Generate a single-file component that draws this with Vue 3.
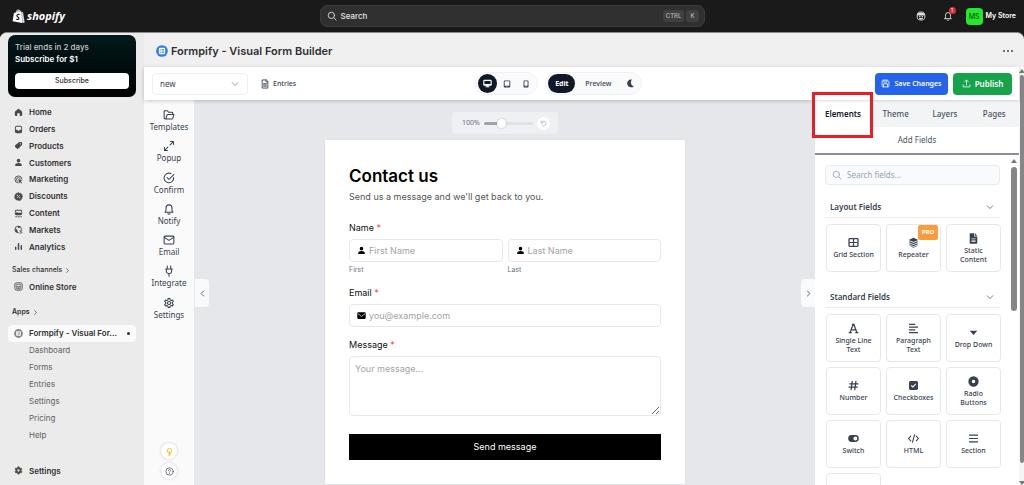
<script setup>
import { ref } from 'vue'

const icons = {
  home: '<path fill="currentColor" d="M8.9 1.7a1.4 1.4 0 0 0-1.8 0L2.3 5.9c-.5.4-.8 1-.8 1.7v5c0 .9.7 1.6 1.6 1.6h2.6V11a2.3 2.3 0 0 1 4.6 0v3.2h2.6c.9 0 1.6-.7 1.6-1.6v-5c0-.7-.3-1.3-.8-1.7z"/>',
  orders: '<path fill="currentColor" fill-rule="evenodd" d="M4.6 1.5h6.8a3 3 0 0 1 3 3v7a3 3 0 0 1-3 3H4.600a3 3 0 0 1-3-3v-7a3 3 0 0 1 3-3zm0 1.600a1.400 1.400 0 0 0-1.400 1.400v4h2.300c.5 0 .8.3 1 .7.200.700.700 1 1.500 1s1.300-.3 1.500-1c.2-.4.5-.7 1-.7h2.300v-4a1.400 1.400 0 0 0-1.400-1.400z"/>',
  products: '<path fill="currentColor" fill-rule="evenodd" d="M8.700 2.300c.4-.4 1-.6 1.600-.6l3 .1c.6 0 1.100.5 1.100 1.100l.1 3c0 .6-.2 1.200-.6 1.600l-6 6a2.200 2.200 0 0 1-3.100 0l-2.700-2.700a2.200 2.200 0 0 1 0-3.100zM11.300 6a1.100 1.100 0 1 0 0-2.200 1.100 1.100 0 0 0 0 2.200z"/>',
  person: '<path fill="currentColor" d="M8 1.500a3.200 3.200 0 1 1 0 6.400 3.200 3.200 0 0 1 0-6.400zM2 12.600c.3-2.500 2.300-3.900 6-3.900s5.700 1.400 6 3.900c.1 1-.5 1.700-1.500 1.700h-9c-1 0-1.600-.7-1.500-1.700z"/>',
  marketing: '<path fill="none" stroke="currentColor" stroke-width="1.600" stroke-linecap="round" d="M7.500 14.200A6.300 6.300 0 1 1 14.200 7.500M7 11A3.300 3.300 0 1 1 11 7"/><path fill="currentColor" d="M7.500 7.300 15 10l-3 1.300 2.500 2.500-1.200 1.200-2.500-2.600-1 2.800z"/>',
  discounts: '<path fill="currentColor" stroke="currentColor" stroke-width="1.200" stroke-linejoin="round" d="M8 1l1.700 1.300L11.800 2l.8 2 2 .8-.3 2.100L15 8.500l-1 1.700.1 2-2 .8-.8 1.900-2-.3L8 15l-1.600-.9-2 .3-.8-1.900-2-.8.1-2L1 8.200l.9-1.500-.2-2 2-.8L4.500 2l2 .3z"/><path stroke="#ebebeb" stroke-width="1.200" stroke-linecap="round" d="M5.800 10.200l4.400-4.400"/><circle cx="5.900" cy="6" r="1" fill="#ebebeb"/><circle cx="10.100" cy="10" r="1" fill="#ebebeb"/>',
  content: '<path fill="currentColor" fill-rule="evenodd" d="M4 1.500h8a2.500 2.500 0 0 1 2.500 2.500v4.500A2.500 2.500 0 0 1 12 11H4a2.500 2.500 0 0 1-2.500-2.500V4A2.500 2.500 0 0 1 4 1.500zm0 1.400c-.6 0-1.100.5-1.100 1.100v3l2.300-1.700 3 2 2.200-1.200 2.700 1.500V4c0-.6-.5-1.100-1.100-1.100z"/><path stroke="currentColor" stroke-width="1.400" stroke-linecap="round" stroke-dasharray="2.600 2" d="M3 13.800h10.500"/>',
  markets: '<circle cx="7.500" cy="8" r="5.900" fill="none" stroke="currentColor" stroke-width="1.500"/><path fill="currentColor" d="M2 6.500c2.500-.2 3.500 1 3.300 2.500l1.500 1.700-.8 3C3.500 13 1.500 10 2 6.500zM7 2c-.5 2 0 3 2 3.200l1.700-1.400L12 3.600C10.500 2 8.500 1.600 7 2z"/><circle cx="12" cy="11.500" r="3.800" fill="#ebebeb"/><path fill="none" stroke="currentColor" stroke-width="1.500" stroke-linecap="round" d="M14 9.300h-2.200a1.200 1.200 0 0 0 0 2.500h.9a1.200 1.200 0 0 1 0 2.500h-2.200"/>',
  analytics: '<path stroke="currentColor" stroke-width="2.700" stroke-linecap="round" d="M3 9.500v3.500M8 3v10M13 6.800V13"/>',
  store: '<rect x="1.500" y="1.500" width="13" height="13" rx="3" fill="none" stroke="currentColor" stroke-width="1.600"/><path fill="none" stroke="currentColor" stroke-width="1.200" d="M4.500 4.300h7l.8 2.600c0 1-.7 1.500-1.500 1.500S9.400 7.900 9.400 7c0 .9-.6 1.400-1.400 1.400S6.600 7.900 6.600 7c0 .9-.6 1.400-1.400 1.400S3.700 7.900 3.700 6.900zM4.700 8.500v3.700h6.600V8.500M7 12v-2h2v2"/>',
  gear: '<path fill="currentColor" stroke="currentColor" stroke-width="1" stroke-linejoin="round" fill-rule="evenodd" d="M6.700 1h2.600l.5 1.900 1.200.7 1.900-.6 1.300 2.300-1.400 1.400v1.400l1.400 1.400-1.300 2.300-1.900-.5-1.200.7-.5 1.900H6.700L6.200 12 5 11.300l-1.900.5-1.300-2.300 1.400-1.400V6.700L1.800 5.300 3.100 3l1.900.6 1.200-.7zM8 4.900a2.500 2.500 0 1 0 0 5 2.500 2.500 0 0 0 0-5z" transform="translate(0 .5)"/>',
  app: '<circle cx="8" cy="8" r="7.800" fill="currentColor"/><rect x="3.800" y="3.800" width="8.400" height="8.400" rx="1.400" fill="#fff"/><path stroke="currentColor" stroke-width="1.100" d="M5.200 6h1M5.200 8h1M5.200 10h1M7.500 6h3.300M7.500 8h3.300M7.500 10h3.300"/>',
  chevR: '<path class="s" d="M6 3.500 10.500 8 6 12.500"/>',
  chevL: '<path class="s" d="M10 3.500 5.500 8 10 12.500"/>',
  chevD: '<path class="s" d="M2.500 5.500 8 11l5.500-5.500"/>',
  search: '<circle class="s" cx="7" cy="7" r="5"/><path class="s" d="m11 11 3.500 3.500"/>',
  folder: '<path class="s" d="M3.700 13.300 5.400 8a1 1 0 0 1 1-.7h8.200l-1.500 5.200a1.200 1.200 0 0 1-1.200.8H2.700a1.200 1.200 0 0 1-1.200-1.200V3.500a1.200 1.200 0 0 1 1.200-1.200h3.200l1.500 2h4.400A1.200 1.200 0 0 1 13 5.500v1.800"/>',
  expand: '<path class="s" d="M10 2h4v4M14 2 9.500 6.500M6 14H2v-4M2 14l4.500-4.500"/>',
  check: '<path class="s" d="M14.200 7.200A6.400 6.400 0 1 1 10.500 2.100M5.500 7.500 8 10l6.500-6.700"/>',
  bell: '<path class="s" d="M3.500 11.500C4.300 10.300 4 9 4 6.500a4 4 0 0 1 8 0c0 2.500-.3 3.800.5 5 .3.400.8.700.8.700H2.700s.5-.3.800-.700zM6.500 14.300c.8.700 2.200.7 3 0"/>',
  mail: '<rect class="s" x="1.500" y="2.800" width="13" height="10.500" rx="1.200"/><path class="s" d="m1.800 4.500 6.200 4 6.200-4"/>',
  plug: '<path class="s" d="M8 15v-3.500M5.700 5V1.500M10.300 5V1.500M3.500 5.300h9M4.500 5.300v3a3 3 0 0 0 3 3h1a3 3 0 0 0 3-3v-3"/>',
  cog: '<path class="s" d="M6.900 1.500h2.200l.4 1.900 1.400.8 1.800-.6 1.100 1.900-1.400 1.300v1.600l1.400 1.300-1.100 1.900-1.800-.6-1.400.8-.4 1.900H6.900l-.4-1.900-1.400-.8-1.800.6-1.100-1.900 1.400-1.300V6.800L2.200 5.500l1.100-1.900 1.800.6 1.400-.8z" transform="translate(0 .4)"/><circle class="s" cx="8" cy="8" r="2.100"/>',
  bulb: '<path class="s" d="M6 11.500c0-1.800-2-2.500-2-5a4 4 0 0 1 8 0c0 2.500-2 3.200-2 5zM6.500 14.500h3M8 11V7.500"/>',
  help: '<circle class="s" cx="8" cy="8" r="6.500"/><path class="s" d="M6 6.300c.2-2.600 4.200-2.400 4 0C9.900 7.500 8 7.800 8 9.200M8 11.500v.1"/>',
  doc: '<path class="s" d="M9.500 1.500h-6v13h9v-10zM9.500 1.500v3h3M5.800 7.500h4.400M5.800 9.500h4.400M5.800 11.500h4.400"/>',
  desktop: '<path fill="currentColor" fill-rule="evenodd" d="M2 1.500h12c.8 0 1.500.7 1.500 1.500v7.500c0 .8-.7 1.500-1.500 1.500H9.800v1.500h2v1.300H4.200v-1.300h2V12H2C1.200 12 .5 11.300.5 10.500V3c0-.8.7-1.500 1.500-1.500zm.5 2v5.500h11V3.500z"/>',
  tablet: '<path fill="currentColor" fill-rule="evenodd" d="M3 .8h10c.8 0 1.500.7 1.500 1.500v11.400c0 .8-.7 1.500-1.500 1.500H3c-.8 0-1.500-.7-1.500-1.500V2.300C1.500 1.500 2.200.8 3 .8zm.3 1.800v8.900h9.400V2.600zM7 12.700v1h2v-1z"/>',
  phone: '<path fill="currentColor" fill-rule="evenodd" d="M4.500.8h7c.8 0 1.500.7 1.500 1.500v11.400c0 .8-.7 1.500-1.500 1.500h-7c-.8 0-1.500-.7-1.500-1.500V2.300C3 1.500 3.700.8 4.500.8zm.3 1.800v8.900h6.400V2.600zM7 12.700v1h2v-1z"/>',
  moon: '<path fill="currentColor" d="M10.500 1A7 7 0 1 0 14 12.800C9 12.500 7 6 10.500 1z"/>',
  undo: '<path class="s" d="M2.500 2.500v4h4M2.800 6.300A5.600 5.600 0 1 1 4 12"/>',
  save: '<path class="s" d="M2 3a1 1 0 0 1 1-1h8.500L14 4.500V13a1 1 0 0 1-1 1H3a1 1 0 0 1-1-1zM5 2v3.500h5.500V2M4.500 14V8.500h7V14"/>',
  upload: '<path class="s" d="M8 10.500V2M4.800 5 8 1.800 11.200 5M2 10.500V14h12v-3.500"/>',
  grid: '<rect x="1.500" y="2.500" width="13" height="11" rx="1" fill="none" stroke="currentColor" stroke-width="1.900"/><path stroke="currentColor" stroke-width="1.800" d="M8 3v10M2 8h12"/>',
  layers: '<path fill="currentColor" d="m8 1 7 3.200-7 3.200-7-3.200zM2.800 6.300 8 8.700l5.200-2.400L15 7.200l-7 3.200-7-3.200zM2.800 9.300 8 11.700l5.200-2.400 1.800.9-7 3.300-7-3.300zM2.800 12.200 8 14.500l5.200-2.300.8.600-6 3-6-3z"/>',
  file: '<path fill="currentColor" fill-rule="evenodd" d="M3.500.5H9V5h4.500v9c0 .8-.7 1.500-1.500 1.500H4c-.8 0-1.500-.7-1.500-1.500V1.500c0-.5.500-1 1-1zM10 .5 13.500 4H10zM5 7.500v1h6v-1zm0 2.300v1h6v-1zm0 2.300v1h6v-1z"/>',
  letter: '<path fill="none" stroke="currentColor" stroke-width="1.900" d="M1 14h4.500M10.500 14H15M3 14 7.500 2h1L13 14M4.800 10h6.400M5.700 2h3"/>',
  para: '<path stroke="currentColor" stroke-width="1.500" d="M1.500 2h9M1.500 6h13M1.500 10h9M1.500 14h13"/>',
  caret: '<path fill="currentColor" d="M2.500 5.500h11L8 11.500z"/>',
  hash: '<path stroke="currentColor" stroke-width="1.800" stroke-linecap="round" d="M6.200 2 4.500 14M11.500 2 9.800 14M2.500 5.500h12M1.500 10.500h12"/>',
  tick: '<rect x="1.500" y="1.500" width="13" height="13" rx="2" fill="currentColor"/><path fill="none" stroke="#fff" stroke-width="1.600" d="m4.800 8 2.300 2.300 4.200-4.500"/>',
  radio: '<circle cx="8" cy="8" r="5" fill="none" stroke="currentColor" stroke-width="5"/>',
  toggle: '<path fill="currentColor" fill-rule="evenodd" d="M5.300 3h5.400a5 5 0 0 1 0 10H5.300a5 5 0 0 1 0-10zm5.400 2.200a2.800 2.800 0 1 0 0 5.600 2.800 2.800 0 0 0 0-5.600z"/>',
  code: '<path fill="none" stroke="currentColor" stroke-width="1.600" stroke-linecap="round" stroke-linejoin="round" d="M4 4.500.8 8 4 11.500M12 4.500 15.200 8 12 11.500M9.500 2.500l-3 11"/>',
  lines: '<path stroke="currentColor" stroke-width="1.700" d="M1.500 3h13M1.500 8h13M1.500 13h13"/>',
  envelope: '<rect x="0.500" y="2" width="15" height="12" rx="1.800" fill="currentColor"/><path fill="none" stroke="#fff" stroke-width="1.200" d="M1 4.500 8 9.500l7-5"/>',
  sidekick: '<path fill="none" stroke="currentColor" stroke-width="1.500" d="M8 1.500c4 0 6 2 6 5.500v3c0 3-2 4.500-6 4.500S2 13 2 10V7c0-3.500 2-5.500 6-5.500z"/><path fill="currentColor" d="M2 5c2-3 10-3 12 0l-1 2H3zM5 8h2v2H5zM9 8h2v2H9zM4.500 11.200h7c-.5 1.600-1.700 2.300-3.500 2.300s-3-.7-3.500-2.300z"/>',
}

const nav = [
  ['home', 'Home'], ['orders', 'Orders'], ['products', 'Products'], ['person', 'Customers'],
  ['marketing', 'Marketing'], ['discounts', 'Discounts'], ['content', 'Content'],
  ['markets', 'Markets'], ['analytics', 'Analytics'],
]
const subNav = ['Dashboard', 'Forms', 'Entries', 'Settings', 'Pricing', 'Help']
const tools = [
  ['folder', 'Templates'], ['expand', 'Popup'], ['check', 'Confirm'], ['bell', 'Notify'],
  ['mail', 'Email'], ['plug', 'Integrate'], ['cog', 'Settings'],
]
const tabs = ['Elements', 'Theme', 'Layers', 'Pages']
const groups = [
  { title: 'Layout Fields', items: [['grid', 'Grid Section'], ['layers', 'Repeater', true], ['file', 'Static Content']] },
  {
    title: 'Standard Fields',
    items: [
      ['letter', 'Single Line Text'], ['para', 'Paragraph Text'], ['caret', 'Drop Down'],
      ['hash', 'Number'], ['tick', 'Checkboxes'], ['radio', 'Radio Buttons'],
      ['toggle', 'Switch'], ['code', 'HTML'], ['lines', 'Section'], ['lines', ''],
    ],
  },
]
const activeTab = ref('Elements')
const zoom = ref(33)
</script>

<template>
  <div class="shell">
    <header class="topbar">
      <a class="logo" href="#">
        <svg class="bag" viewBox="0 0 24 28">
          <path fill="#fff" d="M3.500 7.500 7 6.400C7.500 3.500 9.500 1 12 1c1.200 0 2 .8 2.400 1.800.9-.2 1.800.5 2.200 1.800l1.200.4 1 21L1 23z" />
          <path fill="#ddd" d="m18.300 5 2.200 1.600L23.500 25l-4.300 1.200z" />
          <path fill="none" stroke="#1a1a1a" stroke-width="1" d="M8.500 6.200C9 4 10.300 2.500 12 2.300M12.600 2.500c.5 1 .5 2 .4 2.800M14.600 3.700l.2 1" />
          <path fill="none" stroke="#1a1a1a" stroke-width="2.200" d="M14 10.500c-2.500-1.200-5-.2-5 1.800 0 2.500 3.800 2.600 3.800 5.200 0 2-2.300 2.800-4.800 1.300" />
        </svg>
        <span>shopify</span>
      </a>
      <button class="search" type="button">
        <svg class="i10" viewBox="0 0 16 16" v-html="icons.search" />
        <span>Search</span>
        <kbd>CTRL</kbd><kbd>K</kbd>
      </button>
      <div class="account">
        <button type="button" aria-label="Assistant"><svg class="i10" viewBox="0 0 16 16" v-html="icons.sidekick" /></button>
        <button type="button" class="alerts" aria-label="Notifications">
          <svg class="i10" viewBox="0 0 16 16" v-html="icons.bell" /><span class="count">1</span>
        </button>
        <button type="button" class="store"><span class="avatar">MS</span>My Store</button>
      </div>
    </header>

    <div class="body">
      <aside class="sidebar">
        <section class="trial">
          <p>Trial ends in 2 days</p>
          <strong>Subscribe for $1</strong>
          <button type="button">Subscribe</button>
        </section>
        <nav class="nav nav-main">
          <a v-for="[icon, label] in nav" :key="label" href="#">
            <svg class="i9" viewBox="0 0 16 16" v-html="icons[icon]" />{{ label }}
          </a>
        </nav>
        <a class="group" href="#">Sales channels <svg viewBox="0 0 16 16" v-html="icons.chevR" /></a>
        <nav class="nav"><a href="#"><svg class="i9" viewBox="0 0 16 16" v-html="icons.store" />Online Store</a></nav>
        <a class="group apps" href="#">Apps <svg viewBox="0 0 16 16" v-html="icons.chevR" /></a>
        <nav class="nav nav-app">
          <a class="current" href="#"><svg class="i9 muted" viewBox="0 0 16 16" v-html="icons.app" />Formpify - Visual For...<i class="dot" /></a>
          <a v-for="label in subNav" :key="label" class="sub" href="#">{{ label }}</a>
        </nav>
        <nav class="nav nav-foot"><a href="#"><svg class="i9" viewBox="0 0 16 16" v-html="icons.gear" />Settings</a></nav>
      </aside>

      <main class="main">
        <div class="title">
          <svg viewBox="0 0 16 16" v-html="icons.app" />
          <h1>Formpify - Visual Form Builder</h1>
          <button type="button" aria-label="More actions"><i /><i /><i /></button>
        </div>

        <div class="frame">
          <div class="app">
            <div class="toolbar">
              <div class="tb-left">
                <label class="picker">
                  <select aria-label="Form"><option>new</option></select>
                  <svg viewBox="0 0 16 16" v-html="icons.chevD" />
                </label>
                <button class="entries" type="button"><svg class="i10" viewBox="0 0 16 16" v-html="icons.doc" />Entries</button>
              </div>
              <div class="tb-mid">
                <div class="pill devices">
                  <button class="on" type="button" aria-label="Desktop"><svg class="i9" viewBox="0 0 16 16" v-html="icons.desktop" /></button>
                  <button type="button" aria-label="Tablet"><svg class="i8" viewBox="0 0 16 16" v-html="icons.tablet" /></button>
                  <button type="button" aria-label="Phone"><svg class="i8" viewBox="0 0 16 16" v-html="icons.phone" /></button>
                </div>
                <div class="pill modes">
                  <button class="on" type="button">Edit</button>
                  <button type="button">Preview</button>
                  <button class="dark" type="button" aria-label="Dark mode"><svg class="i9" viewBox="0 0 16 16" v-html="icons.moon" /></button>
                </div>
              </div>
              <div class="tb-right">
                <button class="save" type="button"><svg class="i9" viewBox="0 0 16 16" v-html="icons.save" />Save Changes</button>
                <button class="publish" type="button"><svg class="i9" viewBox="0 0 16 16" v-html="icons.upload" />Publish</button>
              </div>
            </div>

            <div class="work">
              <nav class="rail">
                <div class="tools">
                  <button v-for="[icon, label] in tools" :key="label" type="button">
                    <svg viewBox="0 0 16 16" v-html="icons[icon]" />{{ label }}
                  </button>
                </div>
                <div class="helpers">
                  <button class="tip" type="button" aria-label="Tips"><svg class="i9" viewBox="0 0 16 16" v-html="icons.bulb" /></button>
                  <button type="button" aria-label="Help"><svg class="i9" viewBox="0 0 16 16" v-html="icons.help" /></button>
                </div>
              </nav>

              <section class="canvas">
                <button class="handle left" type="button" aria-label="Collapse tools"><svg class="i9" viewBox="0 0 16 16" v-html="icons.chevL" /></button>
                <button class="handle right" type="button" aria-label="Collapse panel"><svg class="i9" viewBox="0 0 16 16" v-html="icons.chevR" /></button>
                <div class="zoombar">
                  <label for="zoom">100%</label>
                  <input id="zoom" v-model="zoom" type="range" min="0" max="100">
                  <button type="button" aria-label="Reset zoom"><svg viewBox="0 0 16 16" v-html="icons.undo" /></button>
                </div>
                <form class="card" @submit.prevent>
                  <h2>Contact us</h2>
                  <p class="lead">Send us a message and we'll get back to you.</p>
                  <label class="lbl" for="first">Name <b>*</b></label>
                  <div class="pair">
                    <div>
                      <div class="field"><svg class="i9" viewBox="0 0 16 16" v-html="icons.person" /><input id="first" type="text" placeholder="First Name"></div>
                      <label class="hint" for="first">First</label>
                    </div>
                    <div>
                      <div class="field"><svg class="i9" viewBox="0 0 16 16" v-html="icons.person" /><input id="last" type="text" placeholder="Last Name"></div>
                      <label class="hint" for="last">Last</label>
                    </div>
                  </div>
                  <label class="lbl" for="email">Email <b>*</b></label>
                  <div class="field"><svg class="i9" viewBox="0 0 16 16" v-html="icons.envelope" /><input id="email" type="email" placeholder="you@example.com"></div>
                  <label class="lbl" for="message">Message <b>*</b></label>
                  <textarea id="message" placeholder="Your message..." />
                  <button class="send" type="submit">Send message</button>
                </form>
              </section>

              <aside class="panel">
                <div class="tabs">
                  <button v-for="tab in tabs" :key="tab" type="button" :class="{ on: tab === activeTab }" @click="activeTab = tab">{{ tab }}</button>
                </div>
                <div class="marker" />
                <div class="subtab">Add Fields</div>
                <div class="fields">
                  <div class="list">
                    <label class="find"><svg class="i10" viewBox="0 0 16 16" v-html="icons.search" /><input type="text" placeholder="Search fields..." aria-label="Search fields"></label>
                    <section v-for="group in groups" :key="group.title">
                      <button class="head" type="button">{{ group.title }}<svg class="i8" viewBox="0 0 16 16" v-html="icons.chevD" /></button>
                      <div class="cards">
                        <button v-for="[icon, label, pro] in group.items" :key="label" type="button" :aria-label="label || 'More'">
                          <template v-if="label"><svg viewBox="0 0 16 16" v-html="icons[icon]" />{{ label }}</template>
                          <span v-if="pro" class="pro">PRO</span>
                        </button>
                      </div>
                    </section>
                  </div>
                  <div class="bar inner"><i class="up" /><i class="thumb" /></div>
                </div>
              </aside>
            </div>
          </div>
          <div class="bar outer"><i class="up" /><i class="thumb" /><i class="down" /></div>
        </div>
      </main>
    </div>
  </div>
</template>

<style>
html, body { overflow: hidden; }
</style>

<style scoped>
* { box-sizing: border-box; margin: 0; }
button, input, select, textarea { font: inherit; color: inherit; border: 0; background: none; padding: 0; outline: 0; }
button { cursor: pointer; display: flex; align-items: center; justify-content: center; }
a { color: inherit; text-decoration: none; }
svg { flex: none; display: block; }
svg :deep(.s) { fill: none; stroke: currentColor; stroke-width: 1.4; stroke-linecap: round; stroke-linejoin: round; }
.i8 { width: 8px; height: 8px; }
.i9 { width: 9px; height: 9px; }
.i10 { width: 10px; height: 10px; }

.shell { height: 100vh; display: flex; flex-direction: column; background: #1a1a1a; font: 8px/12px Inter, "Liberation Sans", sans-serif; color: #303030; }
.topbar { flex: 0 0 32px; display: grid; grid-template-columns: 1fr minmax(0, 385px) 1fr; align-items: center; padding: 0 8px; color: #e3e3e3; }
.logo { display: flex; align-items: center; gap: 2px; padding-left: 4px; color: #fff; font: italic 700 11px/14px "Open Sans", "Noto Sans", sans-serif; }
.bag { width: 13px; height: 15px; }
.search { height: 22px; background: #303030; border: 1px solid #3a3a3a; border-radius: 7px; padding: 0 5px 0 6px; gap: 2px; font-size: 8px; font-weight: 500; }
.search span { margin: 0 auto 0 2px; }
.search kbd { font: 500 6px/12px Inter, sans-serif; background: #404040; color: #b5b5b5; border-radius: 3px; padding: 0 3px; }
.search kbd:last-child { padding: 0 4px; }
.account { display: flex; justify-content: flex-end; align-items: center; gap: 17px; }
.alerts { position: relative; }
.count { position: absolute; top: -4px; right: -3px; width: 7px; height: 7px; border-radius: 50%; background: #e22c38; color: #fff; font-size: 5px; line-height: 7px; }
.store { gap: 3px; margin-left: -4px; font-size: 7px; font-weight: 600; color: #fff; }
.avatar { width: 17px; height: 17px; border-radius: 4px; background: #25e82b; color: #0b5a12; font-weight: 500; line-height: 17px; }

.body { flex: 1; min-height: 0; display: flex; border-radius: 7px 7px 0 0; overflow: hidden; background: #f0f0f0; border-top: 1px solid #8a8a8a; }
.sidebar { flex: 0 0 144px; background: #ebebeb; padding: 2px 8px 6px; display: flex; flex-direction: column; }
.trial { border-radius: 7px; padding: 6px 7px 8px; background: linear-gradient(#02191c, #000); color: #c3cbcc; font-weight: 500; }
.trial strong { display: block; color: #fff; font-weight: 600; }
.trial button { width: 100%; height: 16px; margin-top: 8px; border-radius: 4px; background: #fff; color: #303030; font-size: 7px; }
.nav { display: grid; grid-auto-rows: 17px; font-weight: 600; }
.nav a { display: flex; align-items: center; gap: 6px; padding: 0 6px; border-radius: 4px; color: #303030; white-space: nowrap; }
.nav svg { color: #4a4a4a; }
.nav-main { height: 151px; grid-auto-rows: 1fr; margin-top: 7px; }
.group { display: flex; align-items: center; gap: 2px; padding: 0 4px; margin-top: 9px; font-size: 7px; font-weight: 500; }
.group svg { width: 7px; height: 7px; }
.group + .nav { margin-top: 2px; }
.group.apps { margin-top: 11px; font-weight: 600; }
.nav.nav-app { height: 118px; grid-auto-rows: 1fr; margin-top: 7px; }
.nav .current { background: #fafafa; }
.nav .muted { color: #858585; }
.nav .sub { padding-left: 21px; font-weight: 400; color: #616161; }
.dot { width: 3px; height: 3px; border-radius: 50%; background: #303030; margin-left: auto; }
.nav-foot { margin-top: auto; }

.main { flex: 1; min-width: 0; display: flex; flex-direction: column; }
.title { flex: 0 0 34px; display: flex; align-items: center; gap: 3px; padding: 1px 11px 0 12px; }
.title svg { width: 12px; height: 12px; color: #2f7bf0; }
.title h1 { font-size: 11px; line-height: 16px; font-weight: 600; flex: 1; }
.title button { gap: 2px; height: 12px; }
.title i { width: 2px; height: 2px; border-radius: 50%; background: #4a4a4a; }
.frame { flex: 1; min-height: 0; display: flex; background: #fff; }
.app { flex: 1; min-width: 0; display: flex; flex-direction: column; font-family: "Noto Sans", "Open Sans", sans-serif; color: #374151; }
.toolbar { position: relative; z-index: 2; flex: 0 0 33px; display: grid; grid-template-columns: 7fr auto 8fr; align-items: center; padding: 0 7px 0 8px; background: #fff; box-shadow: 0 1px 4px #0003; }
.tb-left, .tb-mid, .tb-right { display: flex; align-items: center; }
.tb-left { gap: 12px; }
.picker { width: 96px; height: 22px; display: flex; align-items: center; border: 1px solid #eceef1; border-radius: 4px; padding-right: 8px; }
.picker select { appearance: none; flex: 1; height: 20px; padding-left: 7px; }
.picker svg { width: 8px; height: 8px; color: #6b7280; }
.entries { gap: 3px; font-size: 7px; font-weight: 500; }
.tb-mid { gap: 7px; }
.pill { height: 23px; display: flex; align-items: center; padding: 0 2px; border: 1px solid #eef0f4; border-radius: 12px; background: #f9fafb; font-size: 7px; font-weight: 500; }
.pill button { height: 19px; border-radius: 10px; }
.devices button { width: 19px; }
.pill .on { background: #111827; color: #fff; }
.modes .on { width: 27px; font-weight: 700; }
.modes button { width: 46px; }
.modes .dark { width: 18px; }
.tb-right { justify-content: flex-end; gap: 5px; color: #fff; font-weight: 600; }
.tb-right button { height: 22px; border-radius: 4px; gap: 4px; }
.save { width: 73px; background: #2563eb; font-size: 7px; }
.publish { width: 59px; background: #16a34a; font-size: 8px; }

.work { flex: 1; min-height: 0; display: flex; }
.rail { flex: 0 0 51px; background: #fafafa; border-right: 1px solid #e8e8ea; padding: 7px 0 6px; display: flex; flex-direction: column; justify-content: space-between; }
.tools { display: grid; height: 219px; grid-auto-rows: 1fr; }
.tools button { flex-direction: column; justify-content: flex-start; line-height: 11px; padding-top: 2px; color: #374151; }
.tools svg { width: 12px; height: 12px; }
.helpers { display: flex; flex-direction: column; align-items: center; gap: 4px; }
.helpers button { width: 16px; height: 16px; border-radius: 50%; background: #fff; box-shadow: 0 0 3px #0003; color: #4b5563; }
.helpers .tip { color: #eab308; }

.canvas { position: relative; flex: 1; min-width: 0; background: #e5e7eb; display: flex; flex-direction: column; align-items: center; padding-top: 12px; }
.handle { position: absolute; top: 179px; width: 14px; height: 28px; background: #f9fafb; color: #374151; }
.handle.left { left: 0; border-radius: 0 4px 4px 0; }
.handle.right { right: 0; border-radius: 4px 0 0 4px; }
.zoombar { flex: none; height: 22px; display: flex; align-items: center; gap: 4px; padding: 0 8px 0 10px; border-radius: 4px; background: #eff0f3; font-size: 7px; color: #6b7280; }
.zoombar input { appearance: none; width: 49px; height: 3px; border-radius: 2px; background: linear-gradient(90deg, #9ca3af 36%, #e0e2e6 36%); }
.zoombar input::-webkit-slider-thumb { appearance: none; width: 9px; height: 9px; border-radius: 50%; background: #fff; box-shadow: 0 0 2px #0004; }
.zoombar button { width: 13px; height: 13px; border-radius: 50%; background: #fff; color: #9ca3af; }
.zoombar svg { width: 7px; height: 7px; }
.card { flex: none; width: calc(100% - 48px); max-width: 360px; margin-top: 6px; padding: 24px; background: #fff; box-shadow: 0 0 2px #0001; font: 9px/14px Inter, "Open Sans", sans-serif; color: #111; }
.card h2 { font-size: 17px; line-height: 24px; font-weight: 600; color: #000; }
.lead { margin-top: 2px; color: #555; }
.lbl { display: block; margin: 11px 0 4px; }
.lead + .lbl { margin-top: 17px; }
.lbl b { color: #ef4444; font-weight: 400; }
.pair { display: grid; grid-template-columns: repeat(2, minmax(0, 1fr)); gap: 5px; }
.field { height: 23px; display: flex; align-items: center; gap: 3px; padding: 0 7px; border: 1px solid #e8e8ea; border-radius: 4px; color: #000; }
.field input { flex: 1; min-width: 0; }
.card ::placeholder { color: #a3a3a3; opacity: 1; }
.hint { display: block; margin-top: 2px; font-size: 7px; line-height: 11px; color: #6b7280; }
textarea { display: block; width: 100%; height: 60px; padding: 5px; border: 1px solid #e8e8ea; border-radius: 4px; resize: vertical; }
.send { width: 100%; height: 26px; margin-top: 18px; background: #000; color: #fff; }

.panel { position: relative; z-index: 3; flex: 0 0 204px; display: flex; flex-direction: column; color: #374151; }
.tabs { flex: 0 0 27px; display: grid; grid-template-columns: 56px repeat(3, 1fr); background: #f3f4f6; font-weight: 500; color: #4b5563; }
.tabs button { box-shadow: inset 0 3px 3px -2px #0002; }
.tabs .on { background: #fff; color: #111827; font-weight: 600; }
.marker { position: absolute; top: -8px; left: -3px; width: 61px; height: 46px; border: 3px solid #ed1c24; pointer-events: none; }
.subtab { flex: 0 0 28px; display: flex; align-items: center; justify-content: center; background: #fff; border-bottom: 2px solid #8b8e9a; color: #4b5563; }
.fields { flex: 1; min-height: 0; display: flex; background: #fff; }
.list { flex: 1; min-width: 0; overflow: hidden; padding: 10px 8px 0 10px; }
.find { height: 20px; display: flex; align-items: center; gap: 5px; padding: 0 6px; border: 1px solid #e9ebee; border-radius: 4px; background: #f9fafb; color: #9ca3af; }
.find input { flex: 1; min-width: 0; }
.find ::placeholder { color: #9ca3af; opacity: 1; }
.head { width: 100%; height: 22px; margin-top: 11px; padding: 0 6px 0 5px; justify-content: space-between; border-bottom: 1px solid #e9ebee; font-weight: 600; }
section + section .head { margin-top: 14px; }
.cards { display: grid; grid-template-columns: repeat(3, minmax(0, 1fr)); gap: 5px; padding: 6px 0 0 1px; margin-right: -1px; }
.cards button { position: relative; height: 48px; flex-direction: column; gap: 2px; padding: 0 4px; border: 1px solid #e5e7eb; border-radius: 4px; font-size: 7px; line-height: 9px; font-weight: 500; }
.cards svg { width: 11px; height: 11px; }
.pro { position: absolute; top: 0; right: 2px; width: 20px; height: 15px; border-radius: 2px; background: #fb9d3c; color: #fff; font-size: 6px; line-height: 15px; font-weight: 700; }
.bar { display: flex; flex-direction: column; align-items: center; }
.bar .thumb { background: #868686; border-radius: 3px; }
.up { border: 3px solid transparent; border-top: 0; border-bottom: 4px solid #777; }
.down { border: 3px solid transparent; border-bottom: 0; border-top: 4px solid #777; margin-top: auto; }
.inner { flex: 0 0 11px; padding-top: 4px; }
.inner .thumb { width: 6px; height: 144px; margin-top: 4px; }
.outer { flex: 0 0 5px; padding: 2px 0 0 1px; background: #f5f5f5; overflow: hidden; }
.outer .thumb { width: 4px; height: 388px; margin-top: 2px; border-radius: 2px; }
</style>
